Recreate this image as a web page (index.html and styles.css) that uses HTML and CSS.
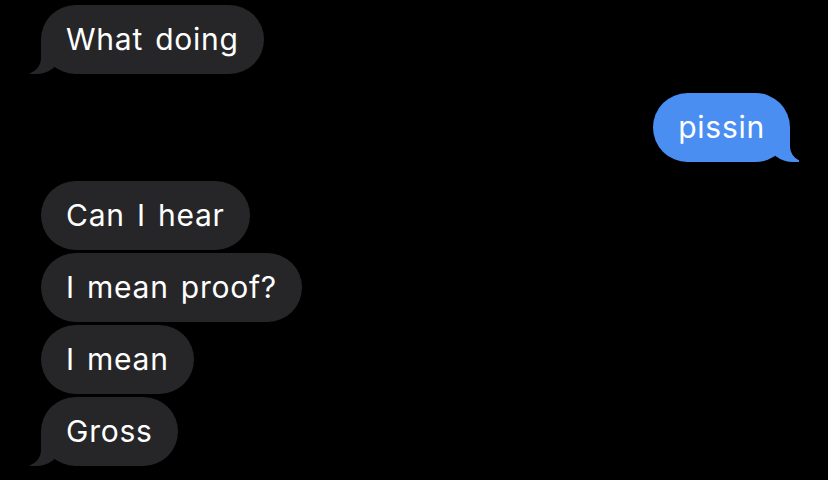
FILE: index.html
```html
<!DOCTYPE html>
<html lang="en">
<head>
    <meta charset="UTF-8">
    <meta name="viewport" content="width=device-width, initial-scale=1.0">
    <title>Messages</title>
    <link rel="stylesheet" href="styles.css">
</head>
<body>

<div class="thread">
    <div class="group received">
        <div class="bubble tail">What doing</div>
    </div>

    <div class="group sent">
        <div class="bubble tail">pissin</div>
    </div>

    <div class="group received">
        <div class="bubble">Can I hear</div>
        <div class="bubble">I mean proof?</div>
        <div class="bubble">I mean</div>
        <div class="bubble tail">Gross</div>
    </div>
</div>

</body>
</html>
```

FILE: styles.css
```css
body {
    margin: 0;
    padding: 0;
    background-color: #000;
    font-family: Inter, "Noto Sans", "Liberation Sans", sans-serif;
    overflow: hidden;
}

.thread {
    display: flex;
    flex-direction: column;
    gap: 19px;
    padding: 5px 38px 0 41px;
}

.group {
    display: flex;
    flex-direction: column;
    gap: 3px;
}

.group.received {
    align-items: flex-start;
}

.group.sent {
    align-items: flex-end;
}

.bubble {
    position: relative;
    padding: 16px 25px;
    font-size: 30px;
    line-height: 37px;
    letter-spacing: 0.75px;
    word-spacing: 3px;
    color: #fff;
    border-radius: 35px;
    background-color: #262628;
}

.sent .bubble {
    background-color: #4a8ef2;
}

/* the little tail under the last bubble */
.bubble.tail::before,
.bubble.tail::after {
    content: "";
    position: absolute;
    bottom: 0;
    height: 34px;
}

.received .bubble.tail::before {
    left: -11px;
    width: 30px;
    background-color: #262628;
    border-bottom-right-radius: 24px 20px;
}

.received .bubble.tail::after {
    left: -30px;
    width: 30px;
    background-color: #000;
    border-bottom-right-radius: 16px;
}

.sent .bubble.tail::before {
    right: -9px;
    width: 30px;
    background-color: #4a8ef2;
    border-bottom-left-radius: 24px 20px;
}

.sent .bubble.tail::after {
    right: -30px;
    width: 30px;
    background-color: #000;
    border-bottom-left-radius: 16px;
}
```
